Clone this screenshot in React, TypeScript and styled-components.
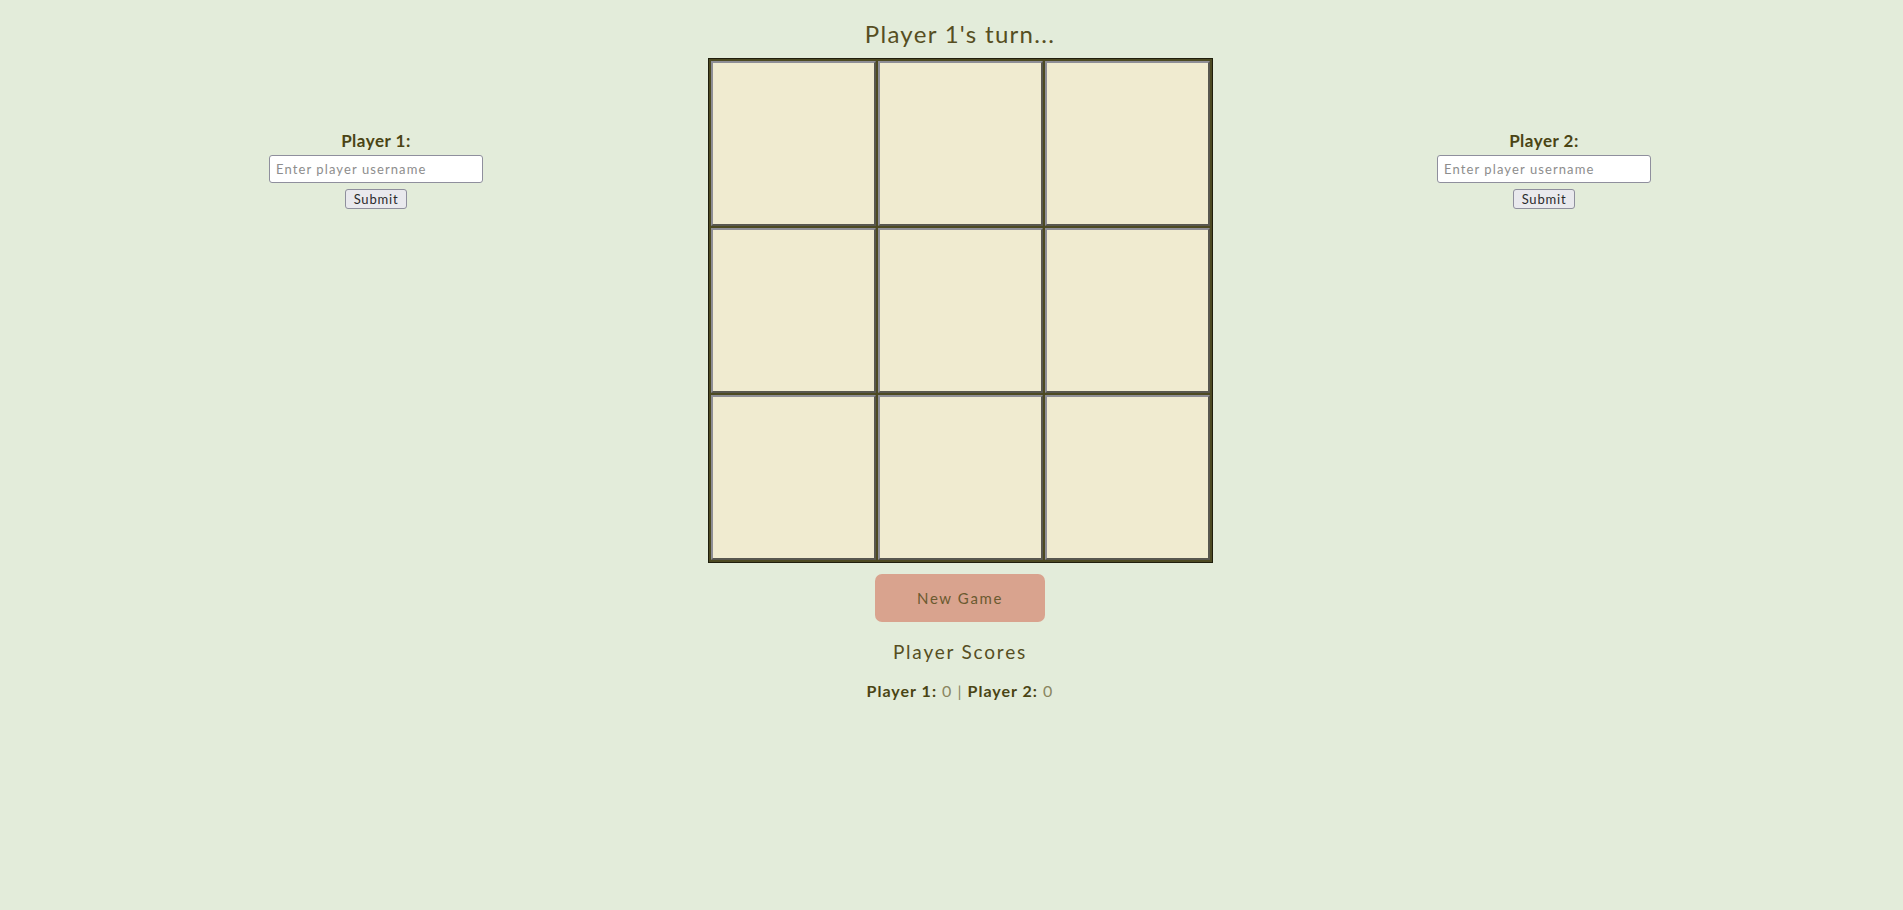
import React from 'react'
import styled, { createGlobalStyle } from 'styled-components'

const GlobalStyle = createGlobalStyle`
    html, body {
        margin: 0;
        padding: 0;
        background-color: #e3ecda;
    }
    body {
        font-family: Lato, "Noto Sans", sans-serif;
        color: #4a4418;
        min-height: 910px;
    }
`

const Layout = styled.main`
    display: grid;
    grid-template-columns: repeat(3, 584px);
    justify-content: center;
    align-items: start;
    padding-left: 17px;
`

const SidePanel = styled.section`
    display: flex;
    flex-direction: column;
    align-items: center;
    padding-top: 131px;
`

const PlayerLabel = styled.label`
    font-size: 17px;
    font-weight: 700;
    letter-spacing: 0.5px;
    color: #4a4414;
    line-height: 20px;
    margin-bottom: 4px;
`

const NameInput = styled.input`
    box-sizing: border-box;
    width: 214px;
    height: 28px;
    padding: 0 6px;
    border: 1px solid #8f8f9d;
    border-radius: 3px;
    background: #ffffff;
    font-family: Lato, "Noto Sans", sans-serif;
    font-size: 13px;
    letter-spacing: 1.1px;
    color: #333;
    &::placeholder {
        color: #8d8d8d;
    }
`

const SubmitButton = styled.button`
    box-sizing: border-box;
    margin-top: 6px;
    width: 62px;
    height: 20px;
    padding: 0;
    border: 1px solid #8f8f9d;
    border-radius: 3px;
    background: #e9e9ed;
    font-family: Lato, "Noto Sans", sans-serif;
    font-size: 13px;
    letter-spacing: 0.8px;
    color: #2b2b2b;
`

const Center = styled.section`
    display: flex;
    flex-direction: column;
    align-items: center;
`

const Turn = styled.h1`
    margin: 19px 0 9px;
    font-size: 24px;
    font-weight: 400;
    line-height: 30px;
    letter-spacing: 1.3px;
    color: #564e22;
`

const Board = styled.div`
    display: grid;
    grid-template-columns: repeat(3, 165px);
    grid-template-rows: repeat(3, 165px);
    gap: 2px;
    padding: 2px;
    background-color: #4d4a22;
    border: 1px solid #1f1e0c;
`

const Cell = styled.button`
    box-sizing: border-box;
    margin: 0;
    padding: 0;
    background-color: #f0ebd0;
    border: 2px solid;
    border-color: #8e8e96 #58574f #58574f #8e8e96;
    cursor: pointer;
`

const NewGame = styled.button`
    margin-top: 11px;
    width: 170px;
    height: 48px;
    border: none;
    border-radius: 7px;
    background-color: #d9a38e;
    font-family: Lato, "Noto Sans", sans-serif;
    font-size: 15px;
    letter-spacing: 1.6px;
    color: #6b5a30;
    cursor: pointer;
`

const ScoresTitle = styled.h2`
    margin: 18px 0 0;
    font-size: 19px;
    font-weight: 400;
    line-height: 24px;
    letter-spacing: 1.8px;
    color: #564e22;
`

const ScoreLine = styled.p`
    margin: 17px 0 0;
    font-size: 16px;
    line-height: 20px;
    letter-spacing: 1px;
    color: #8a8660;
`

const ScoreName = styled.strong`
    font-weight: 700;
    color: #4a4414;
`

const PlayerForm: React.FC<{ label: string }> = ({ label }) => (
    <SidePanel>
        <PlayerLabel>{label}</PlayerLabel>
        <NameInput placeholder="Enter player username" />
        <SubmitButton>Submit</SubmitButton>
    </SidePanel>
)

export default function App() {
    return (
        <>
            <GlobalStyle />
            <Layout>
                <PlayerForm label="Player 1:" />
                <Center>
                    <Turn>Player 1's turn...</Turn>
                    <Board>
                        {Array.from({ length: 9 }, (_, i) => (
                            <Cell key={i} aria-label={`cell ${i + 1}`} />
                        ))}
                    </Board>
                    <NewGame>New Game</NewGame>
                    <ScoresTitle>Player Scores</ScoresTitle>
                    <ScoreLine>
                        <ScoreName>Player 1:</ScoreName> 0 | <ScoreName>Player 2:</ScoreName> 0
                    </ScoreLine>
                </Center>
                <PlayerForm label="Player 2:" />
            </Layout>
        </>
    )
}
